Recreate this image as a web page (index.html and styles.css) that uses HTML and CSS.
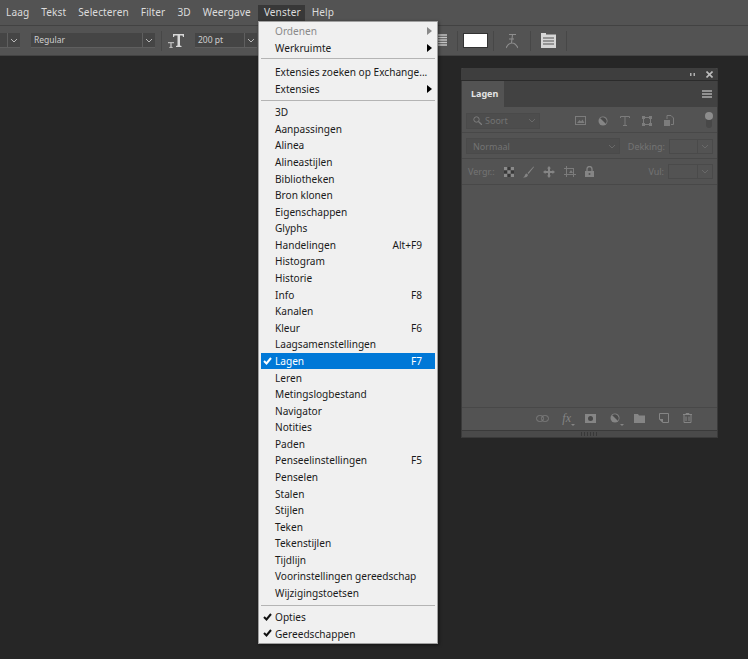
FILE: index.html
```html
<!DOCTYPE html>
<html lang="nl">
<head>
    <meta charset="UTF-8">
    <title>Venster menu</title>
    <link rel="stylesheet" href="styles.css">
</head>
<body>

<nav class="menubar">
    <span class="menubar-item">Laag</span>
    <span class="menubar-item">Tekst</span>
    <span class="menubar-item">Selecteren</span>
    <span class="menubar-item">Filter</span>
    <span class="menubar-item">3D</span>
    <span class="menubar-item">Weergave</span>
    <span class="menubar-item active">Venster</span>
    <span class="menubar-item">Help</span>
</nav>

<div class="options">
    <div class="field field-stub"><span class="field-text"></span><span class="chev"><svg width="8" height="5" viewBox="0 0 8 5"><path d="M1 1l3 3 3-3" fill="none" stroke="#b8b8b8"/></svg></span></div>
    <div class="field field-style"><span class="field-text">Regular</span><span class="chev"><svg width="8" height="5" viewBox="0 0 8 5"><path d="M1 1l3 3 3-3" fill="none" stroke="#b8b8b8"/></svg></span></div>
    <i class="divider d1"></i>
    <svg class="size-icon" width="16" height="15" viewBox="0 0 16 15"><path d="M5 1h11v3h-1l-.5-1.500H12v10l1.500 .5v1H8v-1l1.500-.5v-10H6.500L6 4H5z" fill="#d8d8d8"/><path d="M0 9h6v1.300H3.700v3.400l1 .3v1H1.300v-1l1-.3v-3.400H0z" fill="#b8b8b8"/></svg>
    <div class="field field-size"><span class="field-text">200 pt</span><span class="chev"><svg width="8" height="5" viewBox="0 0 8 5"><path d="M1 1l3 3 3-3" fill="none" stroke="#b8b8b8"/></svg></span></div>
    <div class="options-right">
        <svg class="align-icon" width="9" height="13" viewBox="0 0 9 13"><path d="M0 1h9M0 3.500h9M0 6h9M0 8.500h9M0 11h9" stroke="#c4c4c4" stroke-width="1.500"/></svg>
        <i class="divider"></i>
        <span class="swatch"></span>
        <i class="divider"></i>
        <svg class="warp-icon" width="12" height="16" viewBox="0 0 12 16"><path d="M3 1.500h7M6.500 1.500L5.500 10M0 15c2-4 4-5 6-5s4 1 6 5M3 6h5" fill="none" stroke="#8e8e8e" stroke-width="1.100"/></svg>
        <i class="divider"></i>
        <svg class="char-icon" width="15" height="15" viewBox="0 0 15 15"><path d="M0 0h5v1.500h10V15H0z" fill="#d6d6d6"/><path d="M2 5h11M2 8h11M2 11h11" stroke="#535353"/></svg>
        <i class="divider"></i>
    </div>
</div>

<main class="workspace">
    <section class="panel">
        <div class="panel-title">
            <svg width="5" height="3" viewBox="0 0 5 3"><path d="M0 0h1.500v3H0zM3.500 0H5v3H3.500z" fill="#b0b0b0"/></svg>
            <svg width="7" height="7" viewBox="0 0 7 7"><path d="M.5 .5l6 6M6.500 .5l-6 6" stroke="#bcbcbc" stroke-width="1.600"/></svg>
        </div>
        <div class="panel-tabs">
            <span class="tab">Lagen</span>
            <svg class="panel-menu" width="10" height="8" viewBox="0 0 10 8"><path d="M0 1h10M0 4h10M0 7h10" stroke="#adadad" stroke-width="1.300"/></svg>
        </div>
        <div class="panel-row filter-row">
            <div class="dim-field search">
                <svg width="9" height="9" viewBox="0 0 9 9"><circle cx="3.500" cy="3.500" r="2.700" fill="none" stroke="#7c7c7c"/><path d="M5.500 5.500L9 9" stroke="#7c7c7c" stroke-width="1.300"/></svg>
                <span>Soort</span>
                <svg class="search-chev" width="8" height="5" viewBox="0 0 8 5"><path d="M1 1l3 3 3-3" fill="none" stroke="#696969"/></svg>
            </div>
            <div class="filter-icons">
                <svg width="11" height="9" viewBox="0 0 11 9"><rect x=".5" y=".5" width="10" height="8" fill="none" stroke="#7c7c7c"/><path d="M2 7l2.500-3 1.500 1.500 1.500-2L9.500 7z" fill="#7c7c7c"/></svg>
                <svg width="10" height="10" viewBox="0 0 10 10"><circle cx="5" cy="5" r="4.500" fill="#858585"/><path d="M2.200 2.200A4 4 0 0 1 7.800 7.800z" fill="#4a4a4a"/></svg>
                <svg width="10" height="10" viewBox="0 0 10 10"><path d="M.5 2V.5h9V2M5 .5v9M3 9.500h4" fill="none" stroke="#7c7c7c"/></svg>
                <svg width="10" height="10" viewBox="0 0 10 10"><path d="M1.500 1.500h7v7h-7z" fill="none" stroke="#7c7c7c"/><path d="M0 0h3v3H0zM7 0h3v3H7zM0 7h3v3H0zM7 7h3v3H7z" fill="#7c7c7c"/></svg>
                <svg width="10" height="11" viewBox="0 0 10 11"><path d="M0 5h6v6H0z" fill="#7c7c7c"/><path d="M3 4V.5h4L9.500 3v6.500H7" fill="none" stroke="#7c7c7c"/></svg>
            </div>
            <div class="filter-toggle"><i></i></div>
        </div>
        <div class="panel-row blend-row">
            <div class="dim-field blend"><span>Normaal</span><svg width="8" height="5" viewBox="0 0 8 5"><path d="M1 1l3 3 3-3" fill="none" stroke="#696969"/></svg></div>
            <span class="dim-label">Dekking:</span>
            <div class="dim-num"><i></i><svg width="8" height="5" viewBox="0 0 8 5"><path d="M1 1l3 3 3-3" fill="none" stroke="#696969"/></svg></div>
        </div>
        <div class="panel-row lock-row">
            <span class="dim-label">Vergr.:</span>
            <div class="lock-icons">
                <svg width="10" height="10" viewBox="0 0 10 10"><rect width="10" height="10" fill="#383838"/><path d="M0 0h3.300v3.300H0zM6.700 0H10v3.300H6.700zM3.300 3.300h3.400v3.400H3.300zM0 6.700h3.300V10H0zM6.700 6.700H10V10H6.700z" fill="#8a8a8a"/></svg>
                <svg width="11" height="12" viewBox="0 0 11 12"><path d="M10.500 .5L4.500 7l1 1 5.500-7zM3.500 7.500C1.500 8 2.500 10.500 0 11.500c3 .5 5-1 5-2.700z" fill="#858585"/></svg>
                <svg width="12" height="12" viewBox="0 0 12 12"><path d="M6 0l2 2.500H7V5h2.500V4L12 6 9.500 8V7H7v2.500h1L6 12 4 9.500h1V7H2.500v1L0 6l2.500-2v1H5V2.500H4z" fill="#858585"/></svg>
                <svg width="12" height="11" viewBox="0 0 12 11"><path d="M2.500 0v11M0 2.500h10M9.500 2v9M0 8.500h12" fill="none" stroke="#7c7c7c"/><path d="M5 7l2-3 2 3z" fill="#7c7c7c"/></svg>
                <svg width="9" height="11" viewBox="0 0 9 11"><path d="M2 5V3a2.500 2.500 0 0 1 5 0v2" fill="none" stroke="#858585" stroke-width="1.300"/><path d="M0 5h9v6H0z" fill="#858585"/><circle cx="4.500" cy="8" r="1" fill="#535353"/></svg>
            </div>
            <span class="dim-label fill">Vul:</span>
            <div class="dim-num"><i></i><svg width="8" height="5" viewBox="0 0 8 5"><path d="M1 1l3 3 3-3" fill="none" stroke="#696969"/></svg></div>
        </div>
        <div class="panel-body"></div>
        <div class="panel-foot">
            <svg class="link-icon" width="13" height="7" viewBox="0 0 13 7"><rect x=".5" y=".5" width="7" height="6" rx="3" fill="none" stroke="#7c7c7c"/><rect x="5.500" y=".5" width="7" height="6" rx="3" fill="none" stroke="#7c7c7c"/></svg>
            <span class="fx has-tri">fx</span>
            <svg width="11" height="9" viewBox="0 0 11 9"><path d="M0 0h11v9H0z" fill="#858585"/><circle cx="5.500" cy="4.500" r="2.500" fill="#484848"/></svg>
            <span class="has-tri"><svg width="10" height="10" viewBox="0 0 10 10"><circle cx="5" cy="5" r="4.500" fill="#858585"/><path d="M2.200 2.200A4 4 0 0 1 7.800 7.800z" fill="#4a4a4a"/></svg></span>
            <svg width="11" height="9" viewBox="0 0 11 9"><path d="M0 0h4l1 1.500h6V9H0z" fill="#858585"/></svg>
            <svg width="10" height="10" viewBox="0 0 10 10"><path d="M.5 .5h9v9H4L.5 6z" fill="none" stroke="#858585"/><path d="M0 6h4v4z" fill="#858585"/></svg>
            <svg width="9" height="10" viewBox="0 0 9 10"><path d="M0 1.500h9M3 1.500V.5h3v1M1 2v7.500h7V2M3 3.500v4.500M6 3.500v4.500" fill="none" stroke="#858585"/></svg>
        </div>
        <div class="panel-grip"><i></i></div>
    </section>
</main>

<div class="menu">
    <div class="menu-item disabled"><span>Ordenen</span><b class="arrow"></b></div>
    <div class="menu-item"><span>Werkruimte</span><b class="arrow"></b></div>
    <hr class="menu-sep sep-top">
    <div class="menu-item"><span>Extensies zoeken op Exchange...</span></div>
    <div class="menu-item"><span>Extensies</span><b class="arrow"></b></div>
    <hr class="menu-sep">
    <div class="menu-item"><span>3D</span></div>
    <div class="menu-item"><span>Aanpassingen</span></div>
    <div class="menu-item"><span>Alinea</span></div>
    <div class="menu-item"><span>Alineastijlen</span></div>
    <div class="menu-item"><span>Bibliotheken</span></div>
    <div class="menu-item"><span>Bron klonen</span></div>
    <div class="menu-item"><span>Eigenschappen</span></div>
    <div class="menu-item"><span>Glyphs</span></div>
    <div class="menu-item"><span>Handelingen</span><kbd>Alt+F9</kbd></div>
    <div class="menu-item"><span>Histogram</span></div>
    <div class="menu-item"><span>Historie</span></div>
    <div class="menu-item"><span>Info</span><kbd>F8</kbd></div>
    <div class="menu-item"><span>Kanalen</span></div>
    <div class="menu-item"><span>Kleur</span><kbd>F6</kbd></div>
    <div class="menu-item"><span>Laagsamenstellingen</span></div>
    <div class="menu-item selected"><svg class="check" width="9" height="8" viewBox="0 0 9 8"><path d="M1 4l2.500 2.500L8 1" fill="none" stroke="#fff" stroke-width="2"/></svg><span>Lagen</span><kbd>F7</kbd></div>
    <div class="menu-item"><span>Leren</span></div>
    <div class="menu-item"><span>Metingslogbestand</span></div>
    <div class="menu-item"><span>Navigator</span></div>
    <div class="menu-item"><span>Notities</span></div>
    <div class="menu-item"><span>Paden</span></div>
    <div class="menu-item"><span>Penseelinstellingen</span><kbd>F5</kbd></div>
    <div class="menu-item"><span>Penselen</span></div>
    <div class="menu-item"><span>Stalen</span></div>
    <div class="menu-item"><span>Stijlen</span></div>
    <div class="menu-item"><span>Teken</span></div>
    <div class="menu-item"><span>Tekenstijlen</span></div>
    <div class="menu-item"><span>Tijdlijn</span></div>
    <div class="menu-item"><span>Voorinstellingen gereedschap</span></div>
    <div class="menu-item"><span>Wijzigingstoetsen</span></div>
    <hr class="menu-sep sep-end">
    <div class="menu-item"><svg class="check" width="9" height="8" viewBox="0 0 9 8"><path d="M1 4l2.500 2.500L8 1" fill="none" stroke="#111" stroke-width="2"/></svg><span>Opties</span></div>
    <div class="menu-item"><svg class="check" width="9" height="8" viewBox="0 0 9 8"><path d="M1 4l2.500 2.500L8 1" fill="none" stroke="#111" stroke-width="2"/></svg><span>Gereedschappen</span></div>
</div>

</body>
</html>
```

FILE: styles.css
```css
* {
    box-sizing: border-box;
}

html, body {
    height: 100%;
}

body {
    margin: 0;
    display: flex;
    flex-direction: column;
    overflow: hidden;
    background: #262626;
    color: #d6d6d6;
    font-family: "Noto Sans", "Open Sans", sans-serif;
    font-size: 10.1px;
}

.menubar {
    display: flex;
    align-items: center;
    height: 26px;
    padding-left: 1px;
    background: #535353;
    border-bottom: 1px solid #424242;
}

.menubar-item {
    height: 16px;
    padding: 0 5px;
    margin-right: 2px;
    line-height: 15px;
    letter-spacing: .1px;
    color: #dcdcdc;
}

.menubar-item.active {
    margin-left: 0;
    padding: 0 4px 0 6px;
    background: #383838;
}

.options {
    display: flex;
    align-items: center;
    height: 30px;
    background: #535353;
    border-bottom: 1px solid #434343;
}

.field {
    display: flex;
    height: 15px;
    background: #454545;
    border-bottom: 1px solid #5f5f5f;
    font-size: 8.5px;
    line-height: 14px;
    color: #cfcfcf;
}

.field-text {
    flex: 1;
    padding-left: 3px;
}

.chev {
    display: flex;
    align-items: center;
    justify-content: center;
    width: 13px;
    border-left: 1px solid #5f5f5f;
}

.field-stub {
    width: 20px;
    margin-right: 11px;
}

.field-style {
    width: 124px;
}

.divider {
    display: block;
    width: 1px;
    height: 20px;
    background: #474747;
}

.d1 {
    margin-left: 6px;
}

.size-icon {
    margin-left: 6px;
    margin-right: 11px;
}

.field-size {
    width: 62px;
}

.options-right {
    display: flex;
    align-items: center;
    margin-left: 181px;
}

.align-icon {
    margin-right: 10px;
}

.swatch {
    width: 25px;
    height: 15px;
    margin: 0 5px;
    background: #fff;
    border: 1px solid #333;
}

.warp-icon {
    margin: 0 12px;
}

.char-icon {
    margin: 0 10px;
}

.workspace {
    flex: 1;
    position: relative;
}

/* floating panel */
.panel {
    position: absolute;
    left: 461px;
    top: 12px;
    width: 257px;
    height: 370px;
    display: flex;
    flex-direction: column;
    background: #535353;
    border: solid #3a3a3a;
    border-width: 0 1px 1px;
}

.panel-title {
    display: flex;
    align-items: center;
    justify-content: flex-end;
    gap: 11px;
    height: 13px;
    margin: 0 -1px;
    padding-right: 5px;
    background: #3e3e3e;
    border-bottom: 1px solid #2b2b2b;
    border-radius: 3px 3px 0 0;
}

.panel-tabs {
    display: flex;
    align-items: center;
    justify-content: space-between;
    height: 26px;
    padding-right: 5px;
    background: #424242;
}

.tab {
    width: 42px;
    height: 26px;
    padding-left: 9px;
    line-height: 25px;
    background: #535353;
    color: #e4e4e4;
    font-size: 9px;
    font-weight: 700;
}

.panel-row {
    display: flex;
    align-items: center;
    height: 26px;
    padding: 0 4px;
    border-bottom: 1px solid #484848;
    color: #737373;
    font-size: 9px;
}

.filter-row {
    padding-top: 2px;
}

.blend-row {
    padding-top: 1px;
}

.dim-field {
    display: flex;
    align-items: center;
    height: 16px;
    background: #4d4d4d;
    border: 1px solid #4a4a4a;
}

.search {
    width: 74px;
    gap: 3px;
    padding-left: 6px;
}

.search-chev {
    margin-left: auto;
    margin-right: 3px;
}

.filter-icons {
    display: flex;
    align-items: center;
    gap: 12px;
    margin-left: 35px;
}

.filter-toggle {
    position: relative;
    width: 6px;
    height: 15px;
    margin-left: 32px;
    border-radius: 3px;
    background: #484848;
}

.filter-toggle i {
    position: absolute;
    left: -1px;
    top: -1px;
    width: 8px;
    height: 8px;
    border-radius: 50%;
    background: #8d8d8d;
}

.blend {
    width: 157px;
    justify-content: space-between;
    padding: 0 3px 0 6px;
}

.dim-label {
    margin-left: 8px;
}

.dim-num {
    display: flex;
    align-items: center;
    width: 45px;
    height: 15px;
    margin-left: 4px;
    border: 1px solid #4a4a4a;
}

.dim-num i {
    display: block;
    flex: 1;
    height: 13px;
    border-right: 1px solid #4a4a4a;
}

.dim-num svg {
    margin: 0 3px;
}

.lock-row .dim-label {
    margin-left: 2px;
}

.lock-icons {
    display: flex;
    align-items: center;
    gap: 9px;
    margin-left: 9px;
}

.lock-row .fill {
    margin-left: auto;
}

.panel-body {
    flex: 1;
}

.panel-foot {
    display: flex;
    align-items: center;
    justify-content: flex-end;
    gap: 14px;
    height: 24px;
    padding-right: 25px;
    padding-bottom: 2px;
    background: #535353;
    border-top: 1px solid #484848;
    border-bottom: 1px solid #3a3a3a;
}

.link-icon {
    margin-right: -1px;
}

.fx {
    color: #858585;
    font-family: "Liberation Serif", serif;
    font-style: italic;
    font-size: 12px;
    line-height: 10px;
}

.has-tri {
    position: relative;
    display: flex;
}

.has-tri::after {
    content: "";
    position: absolute;
    right: -4px;
    bottom: -3px;
    border-top: 2px solid #858585;
    border-left: 2px solid transparent;
    border-right: 2px solid transparent;
}

.panel-grip {
    display: flex;
    align-items: center;
    justify-content: center;
    height: 6px;
    background: #4a4a4a;
}

.panel-grip i {
    display: block;
    width: 17px;
    height: 4px;
    background: repeating-linear-gradient(to right, #383838 0 1px, transparent 1px 3px);
}

/* dropdown, lies over the bars and the panel */
.menu {
    position: absolute;
    left: 258px;
    top: 21px;
    width: 180px;
    height: 623px;
    padding: 1px 2px 2px;
    background: #f0f0f0;
    border: 1px solid #a0a0a0;
    box-shadow: 1px 1px 3px rgba(0, 0, 0, .5);
    color: #1a1a1a;
}

.menu-item {
    position: relative;
    display: flex;
    align-items: center;
    justify-content: space-between;
    height: 16.59px;
    padding: 0 13px 0 14px;
    line-height: 16px;
    white-space: nowrap;
}

.menu-item.disabled {
    color: #8a8a8a;
}

.menu-item.selected {
    background: #0078d7;
    color: #fff;
}

.menu-sep {
    height: 1px;
    margin: 3px 0 2.7px;
    border: 0;
    background: #b4b4b4;
}

.menu-sep.sep-top {
    margin: 2px 0 5px;
}

.menu-sep.sep-end {
    margin: 3.7px 0 2.7px;
}

.arrow {
    position: absolute;
    right: 3px;
    top: 4px;
    border-left: 5px solid #000;
    border-top: 4px solid transparent;
    border-bottom: 4px solid transparent;
}

.disabled .arrow {
    border-left-color: #8a8a8a;
}

.check {
    position: absolute;
    left: 2px;
    top: 4px;
}

kbd {
    font: inherit;
}
```
